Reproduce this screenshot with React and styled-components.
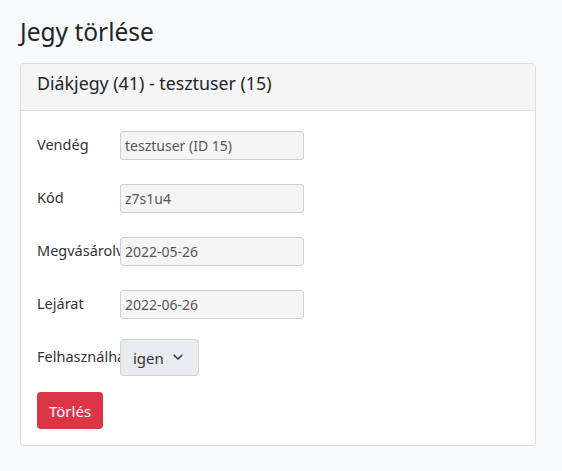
import React from "react";
import styled, { createGlobalStyle } from "styled-components";

const Global = createGlobalStyle`
  html, body { margin: 0; padding: 0; background: #f8f9fa; }
  body { font-family: "Noto Sans", "Open Sans", sans-serif; color: #212529; }
`;

const Page = styled.div`
  padding: 16px 26px 20px 20px;
`;

const Title = styled.h1`
  margin: 0 0 15px 0;
  font-size: 24.5px;
  font-weight: 400;
  line-height: 32px;
  color: #212529;
`;

const Card = styled.div`
  width: 514px;
  background: #fff;
  border: 1px solid #dcdcdc;
  border-radius: 4px;
  overflow: hidden;
`;

const CardHeader = styled.div`
  height: 47px;
  box-sizing: border-box;
  padding: 7px 16px;
  background: #f5f5f5;
  border-bottom: 1px solid #dcdcdc;
  font-size: 17.8px;
  line-height: 24px;
  color: #212529;
`;

const CardBody = styled.div`
  padding: 20px 16px 16px 16px;
  display: flex;
  flex-direction: column;
`;

const Row = styled.div`
  display: flex;
  align-items: center;
  margin-bottom: ${(p) => p.$mb}px;
`;

const Label = styled.div`
  width: 83px;
  flex: 0 0 83px;
  white-space: nowrap;
  overflow: hidden;
  font-size: 14.5px;
  line-height: 18px;
  padding-bottom: 3px;
  color: #333;
`;

const Input = styled.div`
  width: 184px;
  height: 29px;
  box-sizing: border-box;
  padding: 0 4px;
  display: flex;
  align-items: center;
  background: #f5f5f5;
  border: 1px solid #cfcfcf;
  border-radius: 3px;
  font-size: 14px;
  color: #555;
`;

const Select = styled.div`
  width: 79px;
  height: 37px;
  box-sizing: border-box;
  padding: 0 15px 0 12px;
  display: flex;
  align-items: center;
  justify-content: space-between;
  background: #e9ecef;
  border: 1px solid #ced4da;
  border-radius: 4px;
  font-size: 15px;
  color: #333;
`;

const Button = styled.button`
  align-self: flex-start;
  height: 37px;
  padding: 0 12px;
  background: #dc3545;
  color: #fff;
  border: none;
  border-radius: 4px;
  font-family: inherit;
  font-size: 15px;
`;

const fields = [
  { label: "Vendég", value: "tesztuser (ID 15)" },
  { label: "Kód", value: "z7s1u4" },
  { label: "Megvásárolva", value: "2022-05-26" },
  { label: "Lejárat", value: "2022-06-26" },
];

export default function App() {
  return (
    <Page>
      <Global />
      <Title>Jegy törlése</Title>
      <Card>
        <CardHeader>Diákjegy (41) - tesztuser (15)</CardHeader>
        <CardBody>
          {fields.map((f, i) => (
            <Row key={f.label} $mb={i === fields.length - 1 ? 20 : 24}>
              <Label>{f.label}</Label>
              <Input>{f.value}</Input>
            </Row>
          ))}
          <Row $mb={16}>
            <Label>Felhasználható</Label>
            <Select>
              <span>igen</span>
              <svg width="10" height="7" viewBox="0 0 10 7" fill="none">
                <path d="M1.2 1.3 L5 5 L8.8 1.3" stroke="#343a40" strokeWidth="1.6" strokeLinecap="round" strokeLinejoin="round" />
              </svg>
            </Select>
          </Row>
          <Button>Törlés</Button>
        </CardBody>
      </Card>
    </Page>
  );
}
